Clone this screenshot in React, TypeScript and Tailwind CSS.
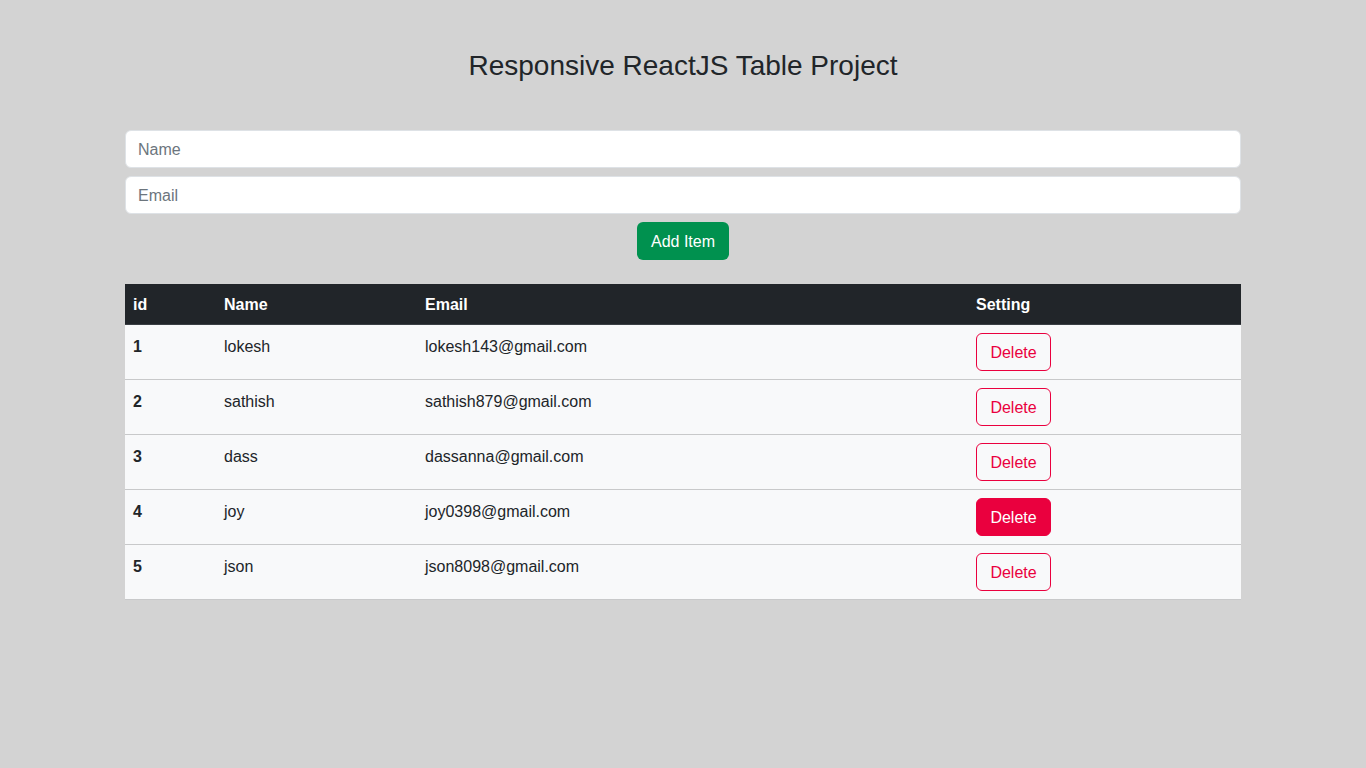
import React from "react";

const rows = [
  { id: 1, name: "lokesh", email: "lokesh143@gmail.com" },
  { id: 2, name: "sathish", email: "sathish879@gmail.com" },
  { id: 3, name: "dass", email: "dassanna@gmail.com" },
  { id: 4, name: "joy", email: "joy0398@gmail.com", active: true },
  { id: 5, name: "json", email: "json8098@gmail.com" },
];

export default function App() {
  return (
    <div
      className="min-h-[768px] w-full bg-[#d3d3d3] text-[#212529]"
      style={{ fontFamily: '"Liberation Sans", Arial, sans-serif' }}
    >
      <div className="mx-auto w-[1140px] px-3">
        <h3 className="pt-[49px] text-center text-[28px] font-medium leading-[34px] text-[#212529]">
          Responsive ReactJS Table Project
        </h3>
        <div className="mt-[47px] flex flex-col gap-[8px]">
          <input
            placeholder="Name"
            className="h-[38px] w-full rounded-[6px] border border-[#dee2e6] bg-white px-3 pt-[1px] text-[16px] text-[#212529] placeholder:text-[#6c757d] outline-none"
          />
          <input
            placeholder="Email"
            className="h-[38px] w-full rounded-[6px] border border-[#dee2e6] bg-white px-3 pt-[1px] text-[16px] text-[#212529] placeholder:text-[#6c757d] outline-none"
          />
        </div>
        <div className="mt-[8px] flex justify-center">
          <button className="h-[38px] w-[92px] rounded-[6px] bg-[#00914f] pt-[1px] text-[16px] text-white">
            Add Item
          </button>
        </div>
        <table className="mt-[24px] w-full border-collapse text-[16px]">
          <thead>
            <tr className="bg-[#212529] text-white">
              <th className="w-[91px] px-2 pt-[9px] pb-[7px] text-left font-bold leading-6">id</th>
              <th className="w-[201px] px-2 pt-[9px] pb-[7px] text-left font-bold leading-6">Name</th>
              <th className="w-[551px] px-2 pt-[9px] pb-[7px] text-left font-bold leading-6">Email</th>
              <th className="px-2 pt-[9px] pb-[7px] text-left font-bold leading-6">Setting</th>
            </tr>
          </thead>
          <tbody>
            {rows.map((r) => (
              <tr key={r.id} className="border-t border-[#c8c9ca] first:border-t-[#3a3f44] last:border-b bg-[#f8f9fa] text-[#212529]">
                <td className="px-2 pt-[10px] pb-2 align-top font-bold leading-6">{r.id}</td>
                <td className="px-2 pt-[10px] pb-2 align-top leading-6">{r.name}</td>
                <td className="px-2 pt-[10px] pb-2 align-top leading-6">{r.email}</td>
                <td className="px-2 py-2 align-top leading-6">
                  {r.active ? (
                    <button className="h-[38px] w-[75px] rounded-[6px] border border-[#ea003e] bg-[#ea003e] pt-[1px] text-[16px] text-white">
                      Delete
                    </button>
                  ) : (
                    <button className="h-[38px] w-[75px] rounded-[6px] border border-[#ea003e] bg-transparent pt-[1px] text-[16px] text-[#ea003e]">
                      Delete
                    </button>
                  )}
                </td>
              </tr>
            ))}
          </tbody>
        </table>
      </div>
    </div>
  );
}
